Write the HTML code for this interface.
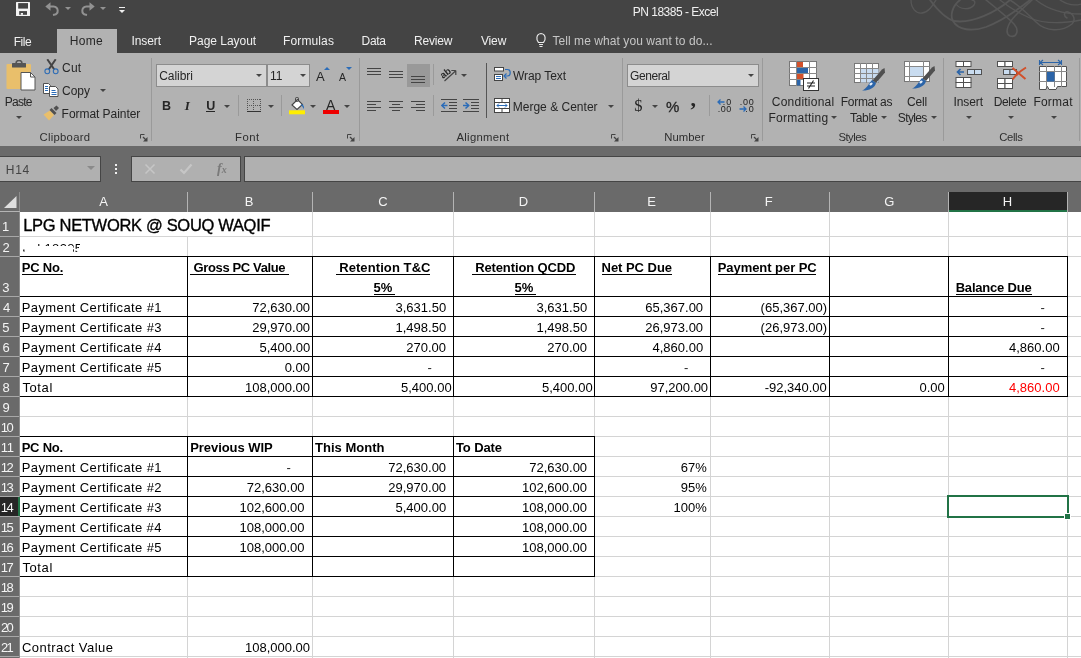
<!DOCTYPE html>
<html><head><meta charset="utf-8"><title>PN 18385 - Excel</title>
<style>
*{box-sizing:border-box;margin:0;padding:0}
html,body{width:1081px;height:658px;overflow:hidden;background:#fff;font-family:"Liberation Sans",Arial,sans-serif;}
#w{position:absolute;left:0;top:0;width:1081px;height:658px;overflow:hidden;will-change:transform}
.abs{position:absolute}
#titlebar{position:absolute;left:0;top:0;width:1081px;height:53px;background:#444444}
#ribbon{position:absolute;left:0;top:53px;width:1081px;height:93px;background:#b2b2b2}
#fbar{position:absolute;left:0;top:146px;width:1081px;height:66px;background:#6a6a6a}
.t{position:absolute;white-space:nowrap;font-size:12px;line-height:14px;color:#262626}
.sep{position:absolute;width:1px;background:#9a9a9a}
.box{position:absolute;background:#d4d4d4;border:1px solid #8c8c8c}
.arr{position:absolute;width:0;height:0;border-left:3px solid transparent;border-right:3px solid transparent;border-top:3px solid #444}
.fbox{position:absolute;background:#b0b0b0;border:1px solid #454545;top:156px;height:26px}
.vg{position:absolute;width:1px;background:#d4d4d4;top:212px;height:446px}
.hg{position:absolute;height:1px;background:#d4d4d4;left:20px;width:1061px}
.chs{position:absolute;top:192px;height:20px;width:1px;background:#b4b4b4}
.rh{position:absolute;left:0;width:19px;background:#6a6a6a;border-bottom:1px solid #a6a6a6}
.c{position:absolute;white-space:nowrap;font-size:13px;line-height:15px;color:#000;}
.bk{position:absolute;background:#000}
</style></head><body><div id="w">

<div id="titlebar"></div>
<svg class="abs" style="left:860px;top:0" width="221" height="53" viewBox="0 0 221 53" fill="none" stroke="#575757" stroke-width="1.3" stroke-linecap="round">
<path d="M51 0 C51 8 56 14 62 13 C69 12 73 5 76 0"/>
<path d="M70 0 C76 8 84 18 94 21 C112 24 136 12 150 0" stroke-width="1.8"/>
<path d="M100 0 C92 6 90 16 93 21 C98 30 112 32 126 27 C146 19 160 8 170 0" stroke-width="1.8"/>
<path d="M96 4 C100 10 110 10 114 5 C116 2 114 0 112 0"/>
<path d="M126 0 C136 8 146 16 154 24 C160 31 156 38 150 36 C144 33 148 23 156 15 C162 9 168 4 172 0" stroke-width="1.6"/>
<path d="M140 0 C150 8 160 14 170 18 C184 24 200 24 221 20"/>
<path d="M150 0 C160 6 168 14 176 22 C186 32 202 32 212 24 C216 20 214 14 208 12 C204 11 203 16 207 18" stroke-width="1.5"/>
<path d="M176 0 C186 8 200 14 221 14"/>
<path d="M200 0 C206 4 214 6 221 4"/>
</svg>
<svg class="abs" style="left:16px;top:2px" width="14" height="14" viewBox="0 0 14 14"><rect x="0" y="0" width="14" height="14" rx="0.500" fill="#f4f4f4"/><rect x="2.200" y="1.100" width="9.800" height="5.500" fill="#444"/><rect x="3.200" y="9.100" width="7.800" height="3.700" fill="#444"/><rect x="4.800" y="11" width="2.200" height="1.800" fill="#f4f4f4"/></svg>
<svg class="abs" style="left:45px;top:2px" width="15" height="14" viewBox="0 0 15 14"><path d="M0.300 4.500L5.500 0.200V8.800z" fill="#929292"/><path d="M5 4.500H8.500a4.600 4.200 0 0 1 0.500 8.300L8 13" fill="none" stroke="#929292" stroke-width="2"/></svg>
<div class="arr" style="left:65px;top:7px;border-top-color:#929292"></div>
<svg class="abs" style="left:80px;top:2px" width="15" height="14" viewBox="0 0 15 14"><path d="M14.700 4.500L9.500 0.200V8.800z" fill="#929292"/><path d="M10 4.500H6.500a4.600 4.200 0 0 0 -0.500 8.300L7 13" fill="none" stroke="#929292" stroke-width="2"/></svg>
<div class="arr" style="left:100px;top:7px;border-top-color:#929292"></div>
<div class="abs" style="left:119px;top:7px;width:6px;height:1px;background:#f0f0f0"></div>
<div class="arr" style="left:119px;top:10px;border-top-color:#f0f0f0"></div>
<div class="t" style="top:5.00px;font-size:12px;line-height:15px;color:#f0f0f0;letter-spacing:-0.505px;left:632.80px;">PN 18385 - Excel</div>
<div class="abs" style="left:57px;top:29px;width:60px;height:24px;background:#b2b2b2"></div>
<div class="t" style="top:35.00px;font-size:12px;line-height:15px;color:#f0f0f0;letter-spacing:-0.467px;left:13.70px;">File</div>
<div class="t" style="top:34.00px;font-size:12px;line-height:15px;color:#262626;letter-spacing:0.250px;left:69.80px;">Home</div>
<div class="t" style="top:34.00px;font-size:12px;line-height:15px;color:#f0f0f0;letter-spacing:-0.080px;left:131.40px;">Insert</div>
<div class="t" style="top:34.00px;font-size:12px;line-height:15px;color:#f0f0f0;letter-spacing:-0.025px;left:189.00px;">Page Layout</div>
<div class="t" style="top:34.00px;font-size:12px;line-height:15px;color:#f0f0f0;letter-spacing:0.126px;left:283.00px;">Formulas</div>
<div class="t" style="top:34.00px;font-size:12px;line-height:15px;color:#f0f0f0;letter-spacing:-0.281px;left:361.50px;">Data</div>
<div class="t" style="top:34.00px;font-size:12px;line-height:15px;color:#f0f0f0;letter-spacing:-0.183px;left:414.00px;">Review</div>
<div class="t" style="top:34.00px;font-size:12px;line-height:15px;color:#f0f0f0;letter-spacing:-0.156px;left:480.97px;">View</div>
<svg class="abs" style="left:535px;top:32px" width="12" height="16" viewBox="0 0 12 16" fill="none" stroke="#e8e8e8" stroke-width="1.2"><path d="M3.500 10.500 C1 8 1 2 6 1.500 C11 2 11 8 8.500 10.500 Z"/><path d="M4 12.500h4M4.500 14.500h3"/></svg>
<div class="t" style="top:34.00px;font-size:12px;line-height:15px;color:#c6c6c6;letter-spacing:0.071px;left:552.43px;">Tell me what you want to do...</div>
<div id="ribbon"></div>
<div class="sep" style="left:151px;top:58px;height:83px"></div>
<div class="sep" style="left:359px;top:58px;height:83px"></div>
<div class="sep" style="left:622px;top:58px;height:83px"></div>
<div class="sep" style="left:762px;top:58px;height:83px"></div>
<div class="sep" style="left:943px;top:58px;height:83px"></div>
<div class="sep" style="left:1079px;top:58px;height:83px"></div>
<div class="t" style="top:130.00px;font-size:11.3px;line-height:14px;color:#2e2e2e;letter-spacing:0.282px;left:39.48px;">Clipboard</div>
<div class="t" style="top:130.00px;font-size:11.3px;line-height:14px;color:#2e2e2e;letter-spacing:0.487px;left:235.00px;">Font</div>
<div class="t" style="top:130.00px;font-size:11.3px;line-height:14px;color:#2e2e2e;letter-spacing:0.291px;left:456.49px;">Alignment</div>
<div class="t" style="top:130.00px;font-size:11.3px;line-height:14px;color:#2e2e2e;letter-spacing:0.069px;left:664.20px;">Number</div>
<div class="t" style="top:130.00px;font-size:11.3px;line-height:14px;color:#2e2e2e;letter-spacing:-0.522px;left:838.40px;">Styles</div>
<div class="t" style="top:130.00px;font-size:11.3px;line-height:14px;color:#2e2e2e;letter-spacing:-0.380px;left:999.28px;">Cells</div>
<svg class="abs" style="left:140px;top:134px" width="8" height="8" viewBox="0 0 8 8" fill="none" stroke="#444" stroke-width="1"><path d="M0.500 4.500V0.500H4.500"/><path d="M3 3L6.500 6.500" stroke-width="1.2"/><path d="M7.500 3v4.500H3z" fill="#444" stroke="none"/></svg>
<svg class="abs" style="left:347px;top:134px" width="8" height="8" viewBox="0 0 8 8" fill="none" stroke="#444" stroke-width="1"><path d="M0.500 4.500V0.500H4.500"/><path d="M3 3L6.500 6.500" stroke-width="1.2"/><path d="M7.500 3v4.500H3z" fill="#444" stroke="none"/></svg>
<svg class="abs" style="left:611px;top:134px" width="8" height="8" viewBox="0 0 8 8" fill="none" stroke="#444" stroke-width="1"><path d="M0.500 4.500V0.500H4.500"/><path d="M3 3L6.500 6.500" stroke-width="1.2"/><path d="M7.500 3v4.500H3z" fill="#444" stroke="none"/></svg>
<svg class="abs" style="left:751px;top:134px" width="8" height="8" viewBox="0 0 8 8" fill="none" stroke="#444" stroke-width="1"><path d="M0.500 4.500V0.500H4.500"/><path d="M3 3L6.500 6.500" stroke-width="1.2"/><path d="M7.500 3v4.500H3z" fill="#444" stroke="none"/></svg>
<svg class="abs" style="left:6px;top:60px" width="30" height="32" viewBox="0 0 30 32">
<rect x="0.500" y="4" width="24.500" height="25" rx="1" fill="#e9bf6b"/>
<rect x="6" y="3" width="14" height="4.500" rx="0.500" fill="#555"/>
<path d="M10 3.500 a3 3 0 0 1 6 0" fill="none" stroke="#555" stroke-width="1.600"/>
<path d="M15 12.500h9.500l4.500 4.500v13h-14z" fill="#fff" stroke="#555" stroke-width="1"/>
<path d="M24.500 12.500v4.500h4.500" fill="none" stroke="#555" stroke-width="1"/>
</svg>
<div class="t" style="top:95.00px;font-size:12px;line-height:15px;color:#262626;letter-spacing:-0.707px;left:4.70px;">Paste</div>
<div class="arr" style="left:16px;top:116px"></div>
<svg class="abs" style="left:44px;top:59px" width="15" height="16" viewBox="0 0 15 16" fill="none"><path d="M3.300 0.300L10.300 10.500M11.700 0.300L4.700 10.500" stroke="#444" stroke-width="2"/><circle cx="3.300" cy="12.300" r="2.400" stroke="#2f6db5" stroke-width="1.100"/><circle cx="11.700" cy="12.300" r="2.400" stroke="#2f6db5" stroke-width="1.100"/></svg>
<div class="t" style="top:61.00px;font-size:12px;line-height:15px;color:#262626;letter-spacing:0.211px;left:62.06px;">Cut</div>
<svg class="abs" style="left:43px;top:83px" width="16" height="14" viewBox="0 0 16 14" fill="#fff" stroke="#505050" stroke-width="1"><path d="M0.500 0.500h5l2 2v8h-7z"/><path d="M2 3.500h3M2 5.500h3M2 7.500h3" stroke="#2b6cb8"/><path d="M6.500 3.500h6l2.500 2.500v7.500h-8.500z"/><path d="M8.500 7.500h4M8.500 9.500h5M8.500 11.500h5" stroke="#2b6cb8"/></svg>
<div class="t" style="top:84.00px;font-size:12px;line-height:15px;color:#262626;letter-spacing:-0.021px;left:62.06px;">Copy</div>
<div class="arr" style="left:100px;top:89px"></div>
<svg class="abs" style="left:43px;top:105px" width="17" height="16" viewBox="0 0 17 16"><path d="M0.500 9.500L7 5.500l4 4.500-5 5.500z" fill="#e9bf6b"/><path d="M6.500 5l2-2 5 5-2 2z" fill="#505050"/><path d="M10.500 3l3-2.500 2.500 2.500-3 3z" fill="#505050"/></svg>
<div class="t" style="top:107.00px;font-size:12px;line-height:15px;color:#262626;letter-spacing:-0.046px;left:61.60px;">Format Painter</div>
<div class="box" style="left:156px;top:64px;width:111px;height:23px"></div>
<div class="t" style="top:69.00px;font-size:12px;line-height:15px;color:#262626;letter-spacing:-0.068px;left:159.26px;">Calibri</div>
<div class="arr" style="left:256px;top:74px"></div>
<div class="box" style="left:267px;top:64px;width:43px;height:23px"></div>
<div class="t" style="top:69.00px;font-size:12px;line-height:15px;color:#262626;left:270.00px;">11</div>
<div class="arr" style="left:300px;top:74px"></div>
<div class="t" style="top:69.00px;font-size:13px;line-height:16px;color:#262626;left:315.97px;">A</div>
<div class="abs" style="left:324px;top:67px;width:0;height:0;border-left:3px solid transparent;border-right:3px solid transparent;border-bottom:3px solid #2b6cb8"></div>
<div class="t" style="top:71.00px;font-size:10.5px;line-height:13px;color:#262626;left:339.00px;">A</div>
<div class="abs" style="left:346px;top:67px;width:0;height:0;border-left:3px solid transparent;border-right:3px solid transparent;border-top:3px solid #2b6cb8"></div>
<div class="t" style="top:98.00px;font-size:12.5px;line-height:16px;color:#262626;font-weight:bold;left:162.00px;">B</div>
<div class="t" style="top:98.00px;font-size:13px;line-height:16px;color:#262626;font-weight:bold;font-style:italic;font-family:'Liberation Serif',serif;left:184.64px;">I</div>
<div class="t" style="top:98.00px;font-size:12.5px;line-height:16px;color:#262626;font-weight:bold;left:206.13px;">U</div>
<div class="abs" style="left:206px;top:111px;width:9px;height:1px;background:#262626"></div>
<div class="arr" style="left:224px;top:105px"></div>
<div class="sep" style="left:238px;top:95px;height:21px"></div>
<svg class="abs" style="left:247px;top:99px" width="14" height="13" viewBox="0 0 14 13" fill="none" stroke="#555" stroke-width="1"><path d="M0.500 0v12M13.500 0v12M0 0.500h14M6.500 0v12M0 6.500h14" stroke-dasharray="1 1"/><path d="M0 12.500h14" stroke="#333"/></svg>
<div class="arr" style="left:268px;top:105px"></div>
<div class="sep" style="left:281px;top:95px;height:21px"></div>
<svg class="abs" style="left:289px;top:97px" width="17" height="18" viewBox="0 0 17 18"><path d="M3 8L8.500 2.500l5 5-5.500 5z" fill="#fff" stroke="#444" stroke-width="1.1"/><rect x="6.500" y="0.500" width="3" height="4" rx="1" fill="none" stroke="#444" stroke-width="1"/><path d="M13 7c2 1.500 2.500 3.500 1.500 5-0.500-1.500-1-3-3-4z" fill="#2b6cb8"/><rect x="0" y="13.300" width="16" height="4" fill="#ffee00"/></svg>
<div class="arr" style="left:310px;top:105px"></div>
<div class="t" style="top:96.00px;font-size:14px;line-height:18px;color:#262626;left:325.97px;">A</div>
<div class="abs" style="left:323px;top:110.300px;width:16px;height:4px;background:#ee0000"></div>
<div class="arr" style="left:344px;top:105px"></div>
<div class="abs" style="left:367px;top:68px;width:14px;height:1px;background:#444"></div><div class="abs" style="left:367px;top:71px;width:14px;height:1px;background:#444"></div><div class="abs" style="left:367px;top:74px;width:14px;height:1px;background:#444"></div>
<div class="abs" style="left:389px;top:71px;width:14px;height:1px;background:#444"></div><div class="abs" style="left:389px;top:74px;width:14px;height:1px;background:#444"></div><div class="abs" style="left:389px;top:77px;width:14px;height:1px;background:#444"></div>
<div class="abs" style="left:407px;top:64px;width:23px;height:23px;background:#999"></div>
<div class="abs" style="left:411px;top:76px;width:14px;height:1px;background:#444"></div><div class="abs" style="left:411px;top:79px;width:14px;height:1px;background:#444"></div><div class="abs" style="left:411px;top:82px;width:14px;height:1px;background:#444"></div>
<div class="sep" style="left:433px;top:64px;height:21px"></div>
<svg class="abs" style="left:440px;top:66px" width="19" height="17" viewBox="0 0 19 17" fill="none"><text x="1" y="11" font-size="9.500" font-family="Liberation Sans, sans-serif" fill="#2a2a2a" font-weight="bold" transform="rotate(-38 5 9)">ab</text><path d="M4.500 15L15.500 5M15.800 4.500h-4.500M15.800 4.500v4.500" stroke="#444" stroke-width="1.200"/></svg>
<div class="arr" style="left:461px;top:74px"></div>
<div class="abs" style="left:486px;top:63px;width:1px;height:55px;background:#555"></div>
<div class="abs" style="left:367px;top:101px;width:14px;height:1px;background:#444"></div><div class="abs" style="left:367px;top:104px;width:9px;height:1px;background:#444"></div><div class="abs" style="left:367px;top:107px;width:14px;height:1px;background:#444"></div><div class="abs" style="left:367px;top:110px;width:9px;height:1px;background:#444"></div>
<div class="abs" style="left:389.0px;top:101px;width:14px;height:1px;background:#444"></div><div class="abs" style="left:392.0px;top:104px;width:8px;height:1px;background:#444"></div><div class="abs" style="left:389.0px;top:107px;width:14px;height:1px;background:#444"></div><div class="abs" style="left:392.0px;top:110px;width:8px;height:1px;background:#444"></div>
<div class="abs" style="left:411px;top:101px;width:14px;height:1px;background:#444"></div><div class="abs" style="left:416px;top:104px;width:9px;height:1px;background:#444"></div><div class="abs" style="left:411px;top:107px;width:14px;height:1px;background:#444"></div><div class="abs" style="left:416px;top:110px;width:9px;height:1px;background:#444"></div>
<div class="sep" style="left:433px;top:95px;height:21px"></div>
<svg class="abs" style="left:441px;top:99px" width="16" height="13" viewBox="0 0 16 13" fill="none" stroke="#444" stroke-width="1"><path d="M0 0.500h16M8 3.500h8M8 6.500h8M8 9.500h8M0 12.500h16"/><path d="M6.500 6.500H1" stroke="#2b6cb8" stroke-width="1.500"/><path d="M4 3.500L0.800 6.500L4 9.500" stroke="#2b6cb8" stroke-width="1.500"/></svg>
<svg class="abs" style="left:463px;top:99px" width="16" height="13" viewBox="0 0 16 13" fill="none" stroke="#444" stroke-width="1"><path d="M0 0.500h16M8 3.500h8M8 6.500h8M8 9.500h8M0 12.500h16"/><path d="M0 6.500H5.500" stroke="#2b6cb8" stroke-width="1.500"/><path d="M2.500 3.500L5.700 6.500L2.500 9.500" stroke="#2b6cb8" stroke-width="1.500"/></svg>
<svg class="abs" style="left:494px;top:67px" width="17" height="15" viewBox="0 0 17 15" fill="none" stroke="#444" stroke-width="1"><rect x="0.500" y="0.500" width="9" height="3.500" fill="#fff"/><rect x="0.500" y="7.500" width="8" height="6" fill="#fff"/><path d="M2 9.500h5M2 11.500h5" stroke="#2b6cb8"/><path d="M11 2.500h2.500a2.500 3 0 0 1 0 6.500h-3" stroke="#2b6cb8" stroke-width="1.200"/><path d="M12.500 6.500l-2.500 2.500 2.500 2.500" stroke="#2b6cb8" stroke-width="1.200"/></svg>
<div class="t" style="top:69.00px;font-size:12px;line-height:15px;color:#262626;letter-spacing:-0.064px;left:513.00px;">Wrap Text</div>
<svg class="abs" style="left:494px;top:98px" width="16" height="15" viewBox="0 0 16 15" fill="none" stroke="#444" stroke-width="1"><rect x="0.500" y="0.500" width="15" height="14" fill="#fff"/><path d="M0 4.500h16M0 10.500h16M8 0v4M8 11v4"/><path d="M3 7.500h10M5 5.500l-2 2 2 2M11 5.500l2 2-2 2" stroke="#2b6cb8"/></svg>
<div class="t" style="top:100.00px;font-size:12px;line-height:15px;color:#262626;letter-spacing:0.016px;left:512.70px;">Merge &amp; Center</div>
<div class="arr" style="left:608px;top:105px"></div>
<div class="box" style="left:627px;top:64px;width:132px;height:23px"></div>
<div class="t" style="top:69.00px;font-size:12px;line-height:15px;color:#262626;letter-spacing:-0.411px;left:630.06px;">General</div>
<div class="arr" style="left:748px;top:74px"></div>
<div class="t" style="top:95.00px;font-size:16.5px;line-height:21px;color:#262626;font-family:'Liberation Serif',serif;left:634.18px;">$</div>
<div class="arr" style="left:652px;top:105px"></div>
<div class="t" style="top:97.00px;font-size:15px;line-height:19px;color:#262626;left:666.03px;-webkit-text-stroke:0.3px #262626;">%</div>
<div class="t" style="top:85.00px;font-size:22px;line-height:28px;color:#262626;font-weight:bold;font-family:'Liberation Serif',serif;left:690.48px;">,</div>
<div class="sep" style="left:709px;top:95px;height:21px"></div>
<div class="t" style="top:97.00px;font-size:9px;line-height:11px;color:#1e1e1e;letter-spacing:1.148px;left:722.72px;">.0</div>
<div class="t" style="top:104.00px;font-size:9px;line-height:11px;color:#1e1e1e;letter-spacing:0.574px;left:717.72px;">.00</div>
<svg class="abs" style="left:717px;top:99px" width="8" height="6" viewBox="0 0 8 6" fill="none" stroke="#2b6cb8" stroke-width="1.300"><path d="M7.500 3H1M3.500 0.500L1 3l2.500 2.500"/></svg>
<div class="t" style="top:97.00px;font-size:9px;line-height:11px;color:#1e1e1e;letter-spacing:0.774px;left:739.72px;">.00</div>
<div class="t" style="top:104.00px;font-size:9px;line-height:11px;color:#1e1e1e;letter-spacing:1.048px;left:745.22px;">.0</div>
<svg class="abs" style="left:738.500px;top:106px" width="8" height="6" viewBox="0 0 8 6" fill="none" stroke="#2b6cb8" stroke-width="1.300"><path d="M0.500 3H7M4.500 0.500L7 3l-2.500 2.500"/></svg>
<svg class="abs" style="left:789px;top:61px" width="31" height="30" viewBox="0 0 31 30"><rect x="0.500" y="0.500" width="27" height="24" fill="#fff" stroke="#777"/><rect x="8" y="1" width="6" height="5.500" fill="#d2502a"/><rect x="8" y="7" width="11" height="5.500" fill="#2b64a8"/><rect x="8" y="13" width="6.500" height="5.500" fill="#d2502a"/><rect x="8" y="19" width="3.500" height="5.500" fill="#2b64a8"/><path d="M0 6.500h28M0 12.500h28M0 18.500h28M7.500 0v25M20.500 0v25" stroke="#888" fill="none" stroke-width="1"/><rect x="14.500" y="17.500" width="15" height="12" fill="#fff" stroke="#333"/><path d="M18 22h8M18 25h8M24.500 19.500l-5 8" stroke="#222" fill="none" stroke-width="1.100"/></svg>
<div class="t" style="top:95.00px;font-size:12px;line-height:15px;color:#262626;letter-spacing:0.237px;left:771.76px;">Conditional</div>
<div class="t" style="top:111.00px;font-size:12px;line-height:15px;color:#262626;letter-spacing:0.268px;left:768.40px;">Formatting</div>
<div class="arr" style="left:830.500px;top:116px"></div>
<svg class="abs" style="left:853px;top:61px" width="34" height="31" viewBox="0 0 34 31"><rect x="1.500" y="2.500" width="24" height="19" fill="#fff" stroke="#777"/><rect x="7.500" y="7" width="18" height="14.500" fill="#c9dcf0"/><path d="M1 7.500h25M1 12.500h25M1 17.500h25M7.500 2v20M13.500 2v20M19.500 2v20" stroke="#888" fill="none"/><path d="M29 8.500l2.500-1.500 0.500 4.500-9 10.500-3.500-2.500z" fill="#505050"/><path d="M19 19l4 3c-1 5-8 8-14 7.500 5-2 6.500-6.500 10-10.500z" fill="#2b64a8"/><ellipse cx="18" cy="23" rx="1.800" ry="1.100" fill="#e6eef8" transform="rotate(-35 18 23)"/></svg>
<div class="t" style="top:95.00px;font-size:12px;line-height:15px;color:#262626;letter-spacing:-0.302px;left:840.80px;">Format as</div>
<div class="t" style="top:111.00px;font-size:12px;line-height:15px;color:#262626;letter-spacing:-0.265px;left:849.93px;">Table</div>
<div class="arr" style="left:880.500px;top:116px"></div>
<svg class="abs" style="left:903px;top:60px" width="34" height="31" viewBox="0 0 34 31"><rect x="1.500" y="1.500" width="25" height="20" fill="#fff" stroke="#777"/><rect x="6.500" y="6.500" width="14" height="10" fill="#c9dcf0" stroke="#888"/><path d="M1 6.500h26M1 16.500h26M6.500 1v21M20.500 1v21" stroke="#888" fill="none"/><path d="M29 7.500l2.500-1.500 0.500 4.500-9 10.500-3.500-2.500z" fill="#505050"/><path d="M19 18l4 3c-1 5-8 8-14 7.500 5-2 6.500-6.500 10-10.500z" fill="#2b64a8"/><ellipse cx="18" cy="22" rx="1.800" ry="1.100" fill="#e6eef8" transform="rotate(-35 18 22)"/></svg>
<div class="t" style="top:95.00px;font-size:12px;line-height:15px;color:#262626;letter-spacing:-0.221px;left:907.06px;">Cell</div>
<div class="t" style="top:111.00px;font-size:12px;line-height:15px;color:#262626;letter-spacing:-0.629px;left:897.84px;">Styles</div>
<div class="arr" style="left:930.500px;top:116px"></div>
<svg class="abs" style="left:955px;top:60px" width="28" height="29" viewBox="0 0 28 29" fill="#fff" stroke="#505050"><rect x="1" y="1.500" width="7.500" height="5"/><rect x="8.500" y="1.500" width="7.500" height="5"/><rect x="12.500" y="9.500" width="7" height="5" fill="#c9dcf0"/><rect x="19.500" y="9.500" width="7" height="5" fill="#c9dcf0"/><rect x="1" y="17.500" width="7.500" height="5"/><rect x="8.500" y="17.500" width="7.500" height="5"/><rect x="1" y="22.500" width="7.500" height="5"/><rect x="8.500" y="22.500" width="7.500" height="5"/><path d="M9 12H2.500M5.500 9l-3 3 3 3" fill="none" stroke="#2b64a8" stroke-width="1.700"/></svg>
<div class="t" style="top:95.00px;font-size:12px;line-height:15px;color:#262626;letter-spacing:-0.080px;left:953.40px;">Insert</div>
<div class="arr" style="left:965.500px;top:116px"></div>
<svg class="abs" style="left:996px;top:60px" width="32" height="30" viewBox="0 0 32 30" fill="#fff" stroke="#505050"><rect x="1.500" y="1.500" width="7.500" height="5"/><rect x="9" y="1.500" width="7.500" height="5"/><rect x="7.500" y="9.500" width="6.500" height="5" fill="#c9dcf0"/><rect x="14" y="9.500" width="6.500" height="5" fill="#c9dcf0"/><rect x="1.500" y="18.500" width="7.500" height="5"/><rect x="9" y="18.500" width="7.500" height="5"/><rect x="1.500" y="23.500" width="7.500" height="5"/><rect x="9" y="23.500" width="7.500" height="5"/><path d="M16.500 8l13 11M30 7.500C24 11 20 15 16.500 19.500" fill="none" stroke="#d2502a" stroke-width="2"/></svg>
<div class="t" style="top:95.00px;font-size:12px;line-height:15px;color:#262626;letter-spacing:-0.385px;left:993.80px;">Delete</div>
<div class="arr" style="left:1007.500px;top:116px"></div>
<svg class="abs" style="left:1038px;top:59px" width="30" height="32" viewBox="0 0 30 32" fill="#fff" stroke="#505050"><path d="M1.500 3.500h22M1.500 1v5M23.500 1v5M5 1L2 3.500l3 2.500M20 1l3 2.500-3 2.500" fill="none" stroke="#2b64a8" stroke-width="1.100"/><path d="M1.500 7.500h27v20h-9l-1.500 3h-7l-1.500-3h-0.500l-1 3h-6.500z"/><path d="M1 12.500h28M1 22.500h28M8.500 7v21M16.500 7v21M23.500 7v21" fill="none" stroke="#888"/><rect x="9" y="13" width="7.500" height="9.500" fill="#2b64a8" stroke="none"/></svg>
<div class="t" style="top:95.00px;font-size:12px;line-height:15px;color:#262626;letter-spacing:0.220px;left:1033.40px;">Format</div>
<div class="arr" style="left:1050.500px;top:116px"></div>
<div id="fbar"></div>
<div class="fbox" style="left:-1px;width:102px"></div>
<div class="t" style="top:163.00px;font-size:12px;line-height:15px;color:#444;letter-spacing:0.783px;left:5.70px;">H14</div>
<div class="arr" style="left:86.500px;top:166px;border-top-color:#8a8a8a;border-left-width:4px;border-right-width:4px;border-top-width:4px"></div>
<div class="abs" style="left:115px;top:164px;width:2px;height:2px;background:#f0f0f0"></div>
<div class="abs" style="left:115px;top:168px;width:2px;height:2px;background:#f0f0f0"></div>
<div class="abs" style="left:115px;top:172px;width:2px;height:2px;background:#f0f0f0"></div>
<div class="fbox" style="left:131px;width:110px"></div>
<svg class="abs" style="left:144px;top:163px" width="12" height="12" viewBox="0 0 12 12" stroke="#c6c6c6" stroke-width="1.500" fill="none"><path d="M1.500 1.500l9 9M10.500 1.500l-9 9"/></svg>
<svg class="abs" style="left:179px;top:163px" width="14" height="12" viewBox="0 0 14 12" stroke="#c6c6c6" stroke-width="2.200" fill="none"><path d="M1.500 6.500l3.500 3.500 7.500-8.500"/></svg>
<div class="abs" style="left:217px;top:161px;font-family:'Liberation Serif',serif;font-style:italic;font-weight:bold;font-size:14px;line-height:16px;color:#7a7a7a;white-space:nowrap">f<span style="font-size:10px">x</span></div>
<div class="fbox" style="left:244px;width:840px"></div>
<div class="t" style="top:194.00px;font-size:13px;line-height:16px;color:#f4f4f4;left:99.27px;">A</div>
<div class="t" style="top:194.00px;font-size:13px;line-height:16px;color:#f4f4f4;left:244.80px;">B</div>
<div class="t" style="top:194.00px;font-size:13px;line-height:16px;color:#f4f4f4;left:378.19px;">C</div>
<div class="t" style="top:194.00px;font-size:13px;line-height:16px;color:#f4f4f4;left:518.80px;">D</div>
<div class="t" style="top:194.00px;font-size:13px;line-height:16px;color:#f4f4f4;left:647.30px;">E</div>
<div class="t" style="top:194.00px;font-size:13px;line-height:16px;color:#f4f4f4;left:764.80px;">F</div>
<div class="t" style="top:194.00px;font-size:13px;line-height:16px;color:#f4f4f4;left:884.19px;">G</div>
<div class="abs" style="left:949px;top:192px;width:118px;height:20px;background:#262626;border-bottom:2px solid #217346"></div>
<div class="t" style="top:194.00px;font-size:13px;line-height:16px;color:#f4f4f4;left:1002.80px;">H</div>
<div class="chs" style="left:19px"></div>
<div class="chs" style="left:187px"></div>
<div class="chs" style="left:312px"></div>
<div class="chs" style="left:453px"></div>
<div class="chs" style="left:594px"></div>
<div class="chs" style="left:710px"></div>
<div class="chs" style="left:829px"></div>
<div class="chs" style="left:948px"></div>
<div class="chs" style="left:1067px"></div>
<div class="abs" style="left:0;top:212px;width:1081px;height:446px;background:#fff"></div>
<div class="vg" style="left:187px"></div>
<div class="vg" style="left:312px"></div>
<div class="vg" style="left:453px"></div>
<div class="vg" style="left:594px"></div>
<div class="vg" style="left:710px"></div>
<div class="vg" style="left:829px"></div>
<div class="vg" style="left:948px"></div>
<div class="vg" style="left:1067px"></div>
<div class="hg" style="top:236px"></div>
<div class="hg" style="top:256px"></div>
<div class="hg" style="top:296px"></div>
<div class="hg" style="top:316px"></div>
<div class="hg" style="top:336px"></div>
<div class="hg" style="top:356px"></div>
<div class="hg" style="top:376px"></div>
<div class="hg" style="top:396px"></div>
<div class="hg" style="top:416px"></div>
<div class="hg" style="top:436px"></div>
<div class="hg" style="top:456px"></div>
<div class="hg" style="top:476px"></div>
<div class="hg" style="top:496px"></div>
<div class="hg" style="top:516px"></div>
<div class="hg" style="top:536px"></div>
<div class="hg" style="top:556px"></div>
<div class="hg" style="top:576px"></div>
<div class="hg" style="top:596px"></div>
<div class="hg" style="top:616px"></div>
<div class="hg" style="top:636px"></div>
<div class="hg" style="top:656px"></div>
<div class="abs" style="left:0;top:192px;width:19px;height:466px;background:#6a6a6a"></div>
<div class="abs" style="left:19px;top:192px;width:1px;height:466px;background:#8c8c8c"></div>
<div class="abs" style="left:0;top:211px;width:20px;height:1px;background:#b4b4b4"></div>
<div class="abs" style="left:0;top:236px;width:19px;height:1px;background:#a8a8a8"></div>
<div class="t" style="top:219.00px;font-size:13px;line-height:16px;color:#f4f4f4;left:2.00px;">1</div>
<div class="abs" style="left:0;top:256px;width:19px;height:1px;background:#a8a8a8"></div>
<div class="t" style="top:240.00px;font-size:13px;line-height:16px;color:#f4f4f4;left:2.42px;">2</div>
<div class="abs" style="left:0;top:296px;width:19px;height:1px;background:#a8a8a8"></div>
<div class="t" style="top:280.00px;font-size:13px;line-height:16px;color:#f4f4f4;left:2.33px;">3</div>
<div class="abs" style="left:0;top:316px;width:19px;height:1px;background:#a8a8a8"></div>
<div class="t" style="top:300.00px;font-size:13px;line-height:16px;color:#f4f4f4;left:2.89px;">4</div>
<div class="abs" style="left:0;top:336px;width:19px;height:1px;background:#a8a8a8"></div>
<div class="t" style="top:320.00px;font-size:13px;line-height:16px;color:#f4f4f4;left:2.27px;">5</div>
<div class="abs" style="left:0;top:356px;width:19px;height:1px;background:#a8a8a8"></div>
<div class="t" style="top:340.00px;font-size:13px;line-height:16px;color:#f4f4f4;left:2.39px;">6</div>
<div class="abs" style="left:0;top:376px;width:19px;height:1px;background:#a8a8a8"></div>
<div class="t" style="top:360.00px;font-size:13px;line-height:16px;color:#f4f4f4;left:2.42px;">7</div>
<div class="abs" style="left:0;top:396px;width:19px;height:1px;background:#a8a8a8"></div>
<div class="t" style="top:380.00px;font-size:13px;line-height:16px;color:#f4f4f4;left:2.50px;">8</div>
<div class="abs" style="left:0;top:416px;width:19px;height:1px;background:#a8a8a8"></div>
<div class="t" style="top:400.00px;font-size:13px;line-height:16px;color:#f4f4f4;left:2.41px;">9</div>
<div class="abs" style="left:0;top:436px;width:19px;height:1px;background:#a8a8a8"></div>
<div class="t" style="top:420.00px;font-size:13px;line-height:16px;color:#f4f4f4;letter-spacing:-1.300px;left:0.70px;">10</div>
<div class="abs" style="left:0;top:456px;width:19px;height:1px;background:#a8a8a8"></div>
<div class="t" style="top:440.00px;font-size:13px;line-height:16px;color:#f4f4f4;letter-spacing:-0.300px;left:0.70px;">11</div>
<div class="abs" style="left:0;top:476px;width:19px;height:1px;background:#a8a8a8"></div>
<div class="t" style="top:460.00px;font-size:13px;line-height:16px;color:#f4f4f4;letter-spacing:-1.300px;left:0.70px;">12</div>
<div class="abs" style="left:0;top:496px;width:19px;height:1px;background:#a8a8a8"></div>
<div class="t" style="top:480.00px;font-size:13px;line-height:16px;color:#f4f4f4;letter-spacing:-1.300px;left:0.70px;">13</div>
<div class="abs" style="left:0;top:497px;width:18px;height:19px;background:#262626"></div>
<div class="abs" style="left:18px;top:497px;width:2px;height:19px;background:#217346"></div>
<div class="abs" style="left:0;top:516px;width:19px;height:1px;background:#a8a8a8"></div>
<div class="t" style="top:500.00px;font-size:13px;line-height:16px;color:#f4f4f4;letter-spacing:-1.422px;left:0.70px;">14</div>
<div class="abs" style="left:0;top:536px;width:19px;height:1px;background:#a8a8a8"></div>
<div class="t" style="top:520.00px;font-size:13px;line-height:16px;color:#f4f4f4;letter-spacing:-1.300px;left:0.70px;">15</div>
<div class="abs" style="left:0;top:556px;width:19px;height:1px;background:#a8a8a8"></div>
<div class="t" style="top:540.00px;font-size:13px;line-height:16px;color:#f4f4f4;letter-spacing:-1.300px;left:0.70px;">16</div>
<div class="abs" style="left:0;top:576px;width:19px;height:1px;background:#a8a8a8"></div>
<div class="t" style="top:560.00px;font-size:13px;line-height:16px;color:#f4f4f4;letter-spacing:-1.300px;left:0.70px;">17</div>
<div class="abs" style="left:0;top:596px;width:19px;height:1px;background:#a8a8a8"></div>
<div class="t" style="top:580.00px;font-size:13px;line-height:16px;color:#f4f4f4;letter-spacing:-1.300px;left:0.70px;">18</div>
<div class="abs" style="left:0;top:616px;width:19px;height:1px;background:#a8a8a8"></div>
<div class="t" style="top:600.00px;font-size:13px;line-height:16px;color:#f4f4f4;letter-spacing:-1.300px;left:0.70px;">19</div>
<div class="abs" style="left:0;top:636px;width:19px;height:1px;background:#a8a8a8"></div>
<div class="t" style="top:620.00px;font-size:13px;line-height:16px;color:#f4f4f4;letter-spacing:-1.723px;left:1.12px;">20</div>
<div class="abs" style="left:0;top:656px;width:19px;height:1px;background:#a8a8a8"></div>
<div class="t" style="top:640.00px;font-size:13px;line-height:16px;color:#f4f4f4;letter-spacing:-1.723px;left:1.12px;">21</div>
<div class="abs" style="left:0;top:676px;width:19px;height:1px;background:#a8a8a8"></div>
<div class="t" style="top:660.00px;font-size:13px;line-height:16px;color:#f4f4f4;letter-spacing:-1.723px;left:1.12px;">22</div>
<svg class="abs" style="left:4px;top:196px" width="13" height="12" viewBox="0 0 13 12"><path d="M12.500 0v12h-12.500z" fill="#dedede"/></svg>
<div class="abs" style="left:187px;top:212px;width:1px;height:24px;background:#fff"></div>
<div class="t" style="top:215.00px;font-size:16.5px;line-height:21px;color:#000;letter-spacing:-0.314px;left:23.22px;-webkit-text-stroke:0.35px #000;">LPG NETWORK @ SOUQ WAQIF</div>
<div class="abs" style="left:36px;top:243px;width:44px;height:3px;overflow:hidden"><div class="c" style="left:-14px;top:-2px;letter-spacing:0.300px">PN:18385</div></div>
<div class="abs" style="left:73px;top:246px;width:6px;height:6px;overflow:hidden"><div class="c" style="left:-51px;top:-5px;letter-spacing:0.300px">PN:18385</div></div>
<div class="abs" style="left:22px;top:248px;width:3px;height:4px;overflow:hidden"><div class="c" style="left:0px;top:-9px">,</div></div>
<div class="t" style="top:260.00px;font-size:13px;line-height:16px;color:#000;font-weight:bold;letter-spacing:-0.174px;left:21.66px;">PC No.</div>
<div class="bk" style="left:22px;top:274px;width:41px;height:1px"></div>
<div class="t" style="top:260.00px;font-size:13px;line-height:16px;color:#000;font-weight:bold;letter-spacing:-0.370px;left:193.55px;">Gross PC Value</div>
<div class="bk" style="left:190px;top:274px;width:99px;height:1px"></div>
<div class="t" style="top:260.00px;font-size:13px;line-height:16px;color:#000;font-weight:bold;letter-spacing:0.090px;left:339.16px;">Retention T&amp;C</div>
<div class="bk" style="left:336px;top:274px;width:94px;height:1px"></div>
<div class="t" style="top:280.00px;font-size:13px;line-height:16px;color:#000;font-weight:bold;left:373.42px;">5%</div>
<div class="bk" style="left:374px;top:294px;width:21px;height:1px"></div>
<div class="t" style="top:260.00px;font-size:13px;line-height:16px;color:#000;font-weight:bold;letter-spacing:-0.120px;left:475.16px;">Retention QCDD</div>
<div class="bk" style="left:472px;top:274px;width:104px;height:1px"></div>
<div class="t" style="top:280.00px;font-size:13px;line-height:16px;color:#000;font-weight:bold;left:514.42px;">5%</div>
<div class="bk" style="left:515px;top:294px;width:21px;height:1px"></div>
<div class="t" style="top:260.00px;font-size:13px;line-height:16px;color:#000;font-weight:bold;letter-spacing:-0.036px;left:601.56px;">Net PC Due</div>
<div class="bk" style="left:602px;top:274px;width:70px;height:1px"></div>
<div class="t" style="top:260.00px;font-size:13px;line-height:16px;color:#000;font-weight:bold;letter-spacing:-0.047px;left:717.66px;">Payment per PC</div>
<div class="bk" style="left:718px;top:274px;width:98px;height:1px"></div>
<div class="t" style="top:280.00px;font-size:13px;line-height:16px;color:#000;font-weight:bold;letter-spacing:-0.194px;left:955.66px;">Balance Due</div>
<div class="bk" style="left:956px;top:294px;width:76px;height:1px"></div>
<div class="t" style="top:300.00px;font-size:13px;line-height:16px;color:#000;letter-spacing:0.390px;left:21.80px;">Payment Certificate #1</div>
<div class="t" style="top:300.00px;font-size:13px;line-height:16px;color:#000;right:770.90px;">72,630.00</div>
<div class="t" style="top:300.00px;font-size:13px;line-height:16px;color:#000;right:634.89px;">3,631.50</div>
<div class="t" style="top:300.00px;font-size:13px;line-height:16px;color:#000;right:493.89px;">3,631.50</div>
<div class="t" style="top:300.00px;font-size:13px;line-height:16px;color:#000;right:377.90px;">65,367.00</div>
<div class="t" style="top:300.00px;font-size:13px;line-height:16px;color:#000;right:253.91px;">(65,367.00)</div>
<div class="t" style="top:300.00px;font-size:13px;line-height:16px;color:#262626;left:1040.50px;">-</div>
<div class="t" style="top:320.00px;font-size:13px;line-height:16px;color:#000;letter-spacing:0.390px;left:21.80px;">Payment Certificate #3</div>
<div class="t" style="top:320.00px;font-size:13px;line-height:16px;color:#000;right:770.90px;">29,970.00</div>
<div class="t" style="top:320.00px;font-size:13px;line-height:16px;color:#000;right:634.89px;">1,498.50</div>
<div class="t" style="top:320.00px;font-size:13px;line-height:16px;color:#000;right:493.89px;">1,498.50</div>
<div class="t" style="top:320.00px;font-size:13px;line-height:16px;color:#000;right:377.90px;">26,973.00</div>
<div class="t" style="top:320.00px;font-size:13px;line-height:16px;color:#000;right:253.91px;">(26,973.00)</div>
<div class="t" style="top:320.00px;font-size:13px;line-height:16px;color:#262626;left:1040.50px;">-</div>
<div class="t" style="top:340.00px;font-size:13px;line-height:16px;color:#000;letter-spacing:0.385px;left:21.80px;">Payment Certificate #4</div>
<div class="t" style="top:340.00px;font-size:13px;line-height:16px;color:#000;right:770.89px;">5,400.00</div>
<div class="t" style="top:340.00px;font-size:13px;line-height:16px;color:#000;right:634.98px;">270.00</div>
<div class="t" style="top:340.00px;font-size:13px;line-height:16px;color:#000;right:493.98px;">270.00</div>
<div class="t" style="top:340.00px;font-size:13px;line-height:16px;color:#000;right:377.89px;">4,860.00</div>
<div class="t" style="top:340.00px;font-size:13px;line-height:16px;color:#000;right:21.39px;">4,860.00</div>
<div class="t" style="top:360.00px;font-size:13px;line-height:16px;color:#000;letter-spacing:0.390px;left:21.80px;">Payment Certificate #5</div>
<div class="t" style="top:360.00px;font-size:13px;line-height:16px;color:#000;right:771.06px;">0.00</div>
<div class="t" style="top:360.00px;font-size:13px;line-height:16px;color:#262626;left:427.50px;">-</div>
<div class="t" style="top:360.00px;font-size:13px;line-height:16px;color:#262626;left:684.00px;">-</div>
<div class="t" style="top:360.00px;font-size:13px;line-height:16px;color:#262626;left:1040.50px;">-</div>
<div class="t" style="top:380.00px;font-size:13px;line-height:16px;color:#000;letter-spacing:0.614px;left:22.39px;">Total</div>
<div class="t" style="top:380.00px;font-size:13px;line-height:16px;color:#000;right:770.98px;">108,000.00</div>
<div class="t" style="top:380.00px;font-size:13px;line-height:16px;color:#000;right:629.39px;">5,400.00</div>
<div class="t" style="top:380.00px;font-size:13px;line-height:16px;color:#000;right:488.39px;">5,400.00</div>
<div class="t" style="top:380.00px;font-size:13px;line-height:16px;color:#000;right:372.90px;">97,200.00</div>
<div class="t" style="top:380.00px;font-size:13px;line-height:16px;color:#000;right:254.20px;">-92,340.00</div>
<div class="t" style="top:380.00px;font-size:13px;line-height:16px;color:#000;right:136.26px;">0.00</div>
<div class="t" style="top:380.00px;font-size:13px;line-height:16px;color:#ff0000;right:21.39px;">4,860.00</div>
<div class="t" style="top:440.00px;font-size:13px;line-height:16px;color:#000;font-weight:bold;letter-spacing:-0.214px;left:21.66px;">PC No.</div>
<div class="t" style="top:440.00px;font-size:13px;line-height:16px;color:#000;font-weight:bold;letter-spacing:-0.047px;left:190.16px;">Previous WIP</div>
<div class="t" style="top:440.00px;font-size:13px;line-height:16px;color:#000;font-weight:bold;letter-spacing:0.020px;left:315.00px;">This Month</div>
<div class="t" style="top:440.00px;font-size:13px;line-height:16px;color:#000;font-weight:bold;letter-spacing:-0.127px;left:456.00px;">To Date</div>
<div class="t" style="top:460.00px;font-size:13px;line-height:16px;color:#000;letter-spacing:0.390px;left:21.80px;">Payment Certificate #1</div>
<div class="t" style="top:460.00px;font-size:13px;line-height:16px;color:#262626;left:286.50px;">-</div>
<div class="t" style="top:460.00px;font-size:13px;line-height:16px;color:#000;right:634.90px;">72,630.00</div>
<div class="t" style="top:460.00px;font-size:13px;line-height:16px;color:#000;right:493.90px;">72,630.00</div>
<div class="t" style="top:460.00px;font-size:13px;line-height:16px;color:#000;right:374.15px;">67%</div>
<div class="t" style="top:480.00px;font-size:13px;line-height:16px;color:#000;letter-spacing:0.390px;left:21.80px;">Payment Certificate #2</div>
<div class="t" style="top:480.00px;font-size:13px;line-height:16px;color:#000;right:776.40px;">72,630.00</div>
<div class="t" style="top:480.00px;font-size:13px;line-height:16px;color:#000;right:634.90px;">29,970.00</div>
<div class="t" style="top:480.00px;font-size:13px;line-height:16px;color:#000;right:493.98px;">102,600.00</div>
<div class="t" style="top:480.00px;font-size:13px;line-height:16px;color:#000;right:374.15px;">95%</div>
<div class="t" style="top:500.00px;font-size:13px;line-height:16px;color:#000;letter-spacing:0.390px;left:21.80px;">Payment Certificate #3</div>
<div class="t" style="top:500.00px;font-size:13px;line-height:16px;color:#000;right:776.48px;">102,600.00</div>
<div class="t" style="top:500.00px;font-size:13px;line-height:16px;color:#000;right:634.89px;">5,400.00</div>
<div class="t" style="top:500.00px;font-size:13px;line-height:16px;color:#000;right:493.98px;">108,000.00</div>
<div class="t" style="top:500.00px;font-size:13px;line-height:16px;color:#000;right:374.24px;">100%</div>
<div class="t" style="top:520.00px;font-size:13px;line-height:16px;color:#000;letter-spacing:0.385px;left:21.80px;">Payment Certificate #4</div>
<div class="t" style="top:520.00px;font-size:13px;line-height:16px;color:#000;right:776.48px;">108,000.00</div>
<div class="t" style="top:520.00px;font-size:13px;line-height:16px;color:#000;right:493.98px;">108,000.00</div>
<div class="t" style="top:540.00px;font-size:13px;line-height:16px;color:#000;letter-spacing:0.390px;left:21.80px;">Payment Certificate #5</div>
<div class="t" style="top:540.00px;font-size:13px;line-height:16px;color:#000;right:776.48px;">108,000.00</div>
<div class="t" style="top:540.00px;font-size:13px;line-height:16px;color:#000;right:493.98px;">108,000.00</div>
<div class="t" style="top:560.00px;font-size:13px;line-height:16px;color:#000;letter-spacing:0.614px;left:22.39px;">Total</div>
<div class="t" style="top:640.00px;font-size:13px;line-height:16px;color:#000;letter-spacing:0.472px;left:21.89px;">Contract Value</div>
<div class="t" style="top:640.00px;font-size:13px;line-height:16px;color:#000;right:770.98px;">108,000.00</div>
<div class="bk" style="left:20px;top:256px;width:1048px;height:1px"></div>
<div class="bk" style="left:20px;top:296px;width:1048px;height:1px"></div>
<div class="bk" style="left:20px;top:316px;width:1048px;height:1px"></div>
<div class="bk" style="left:20px;top:336px;width:1048px;height:1px"></div>
<div class="bk" style="left:20px;top:356px;width:1048px;height:1px"></div>
<div class="bk" style="left:20px;top:376px;width:1048px;height:1px"></div>
<div class="bk" style="left:20px;top:396px;width:1048px;height:1px"></div>
<div class="bk" style="left:187px;top:256px;width:1px;height:141px"></div>
<div class="bk" style="left:312px;top:256px;width:1px;height:141px"></div>
<div class="bk" style="left:453px;top:256px;width:1px;height:141px"></div>
<div class="bk" style="left:594px;top:256px;width:1px;height:141px"></div>
<div class="bk" style="left:710px;top:256px;width:1px;height:141px"></div>
<div class="bk" style="left:829px;top:256px;width:1px;height:141px"></div>
<div class="bk" style="left:948px;top:256px;width:1px;height:141px"></div>
<div class="bk" style="left:1067px;top:256px;width:1px;height:141px"></div>
<div class="bk" style="left:20px;top:436px;width:575px;height:1px"></div>
<div class="bk" style="left:20px;top:456px;width:575px;height:1px"></div>
<div class="bk" style="left:20px;top:476px;width:575px;height:1px"></div>
<div class="bk" style="left:20px;top:496px;width:575px;height:1px"></div>
<div class="bk" style="left:20px;top:516px;width:575px;height:1px"></div>
<div class="bk" style="left:20px;top:536px;width:575px;height:1px"></div>
<div class="bk" style="left:20px;top:556px;width:575px;height:1px"></div>
<div class="bk" style="left:20px;top:576px;width:575px;height:1px"></div>
<div class="bk" style="left:187px;top:436px;width:1px;height:141px"></div>
<div class="bk" style="left:312px;top:436px;width:1px;height:141px"></div>
<div class="bk" style="left:453px;top:436px;width:1px;height:141px"></div>
<div class="bk" style="left:594px;top:436px;width:1px;height:141px"></div>
<div class="abs" style="left:947px;top:495px;width:122px;height:23px;border:2px solid #217346"></div>
<div class="abs" style="left:1064px;top:513px;width:7px;height:7px;background:#217346;border:1px solid #fff"></div>
</div></body></html>
